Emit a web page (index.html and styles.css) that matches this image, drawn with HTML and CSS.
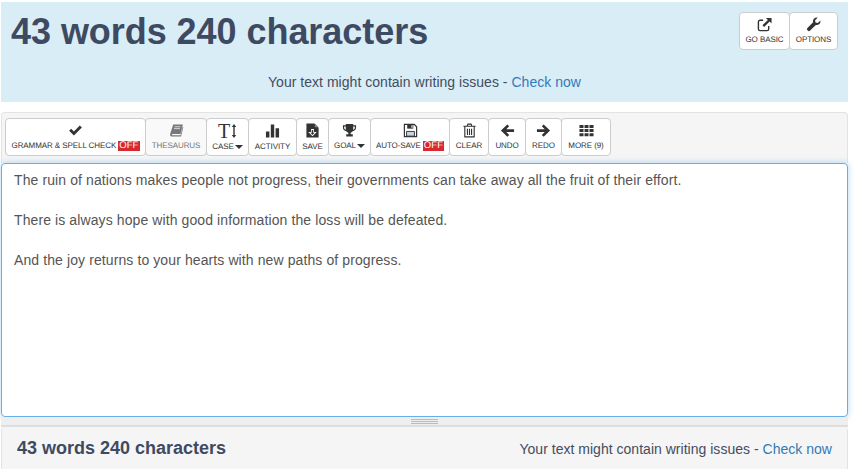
FILE: index.html
```html
<!DOCTYPE html>
<html lang="en">
<head>
<meta charset="utf-8">
<title>Word counter</title>
<link rel="stylesheet" href="styles.css">
</head>
<body>
<div class="page">
  <header class="hero">
    <div class="hero-top">
      <h1 class="hero-title">43 words 240 characters</h1>
      <div class="btn-group">
        <button class="tool tool-basic"><svg class="ico" viewBox="0 0 16 16"><path d="M6.500 3.500H3.200A1.700 1.700 0 0 0 1.500 5.200v7.600a1.700 1.700 0 0 0 1.700 1.700h7.600a1.700 1.700 0 0 0 1.700-1.700V9.500" fill="none" stroke="#333" stroke-width="1.500"/><path d="M9.500 1H15.500V7L13.400 4.900 7.600 10.700 5.800 8.900 11.600 3.100Z" fill="#333"/></svg><span class="lbl">GO BASIC</span></button>
        <button class="tool tool-options"><svg class="ico" viewBox="0 0 16 16"><path d="M15.300 3.600c.3 1.500-.1 2.900-1.200 3.900-1 .9-2.300 1.200-3.600.9L4.400 14.500a1.700 1.700 0 0 1-2.400 0l-.5-.5a1.700 1.700 0 0 1 0-2.400L7.600 5.500c-.3-1.300 0-2.600.9-3.600C9.500.8 10.900.4 12.400.7L9.700 3.400l.4 2.500 2.500.4Z" fill="#333"/></svg><span class="lbl">OPTIONS</span></button>
      </div>
    </div>
    <p class="hero-note">Your text might contain writing issues - <a class="link" href="#">Check now</a></p>
  </header>

  <section class="editor">
    <div class="toolbar">
      <button class="tool tool-grammar"><svg class="ico" viewBox="0 0 16 16"><path d="M1.200 8.300 3.400 6.100 6.300 9 12.600 2.700 14.800 4.900 6.300 13.400Z" fill="#333"/></svg><span class="lbl">GRAMMAR &amp; SPELL CHECK<b class="off">OFF</b></span></button>
      <button class="tool tool-thes"><svg class="ico" viewBox="0 0 16 16"><path d="M4.500 1.500H14.800L12.300 11.800H3.800C3 11.800 2.700 12.800 3.400 13H12.300L14.700 4 15.300 4.500 12.800 14.500H3C1.500 14.500 .8 13 1.300 11.500Z" fill="#777"/><path d="M5.800 4h6.400M5.300 6h6.400" stroke="#f5f5f5" stroke-width=".8"/></svg><span class="lbl">THESAURUS</span></button>
      <button class="tool tool-case"><span class="case-ico">T<span class="case-arrow"><svg viewBox="0 0 6 14"><path d="M3 0 5.200 3H3.700V11H5.200L3 14 .8 11H2.300V3H.8Z" fill="#333"/></svg></span></span><span class="lbl">CASE<i class="caret"></i></span></button>
      <button class="tool tool-activity"><svg class="ico" viewBox="0 0 16 16"><path d="M1 9H4.700V15.500H1ZM6.200 1.500H9.800V15.500H6.200ZM11.300 5.500H15V15.500H11.300Z" fill="#333"/></svg><span class="lbl">ACTIVITY</span></button>
      <button class="tool tool-save"><svg class="ico" viewBox="0 0 16 16"><path d="M1.500 .5H10L14.500 5V15.500H1.500Z" fill="#333"/><path d="M10.500 .5V4.500H14.500Z" fill="#888"/><path d="M6.500 6.500H9.500V9.500H12.500L8 14 3.500 9.500H6.500Z" fill="#fff"/><path d="M7.300 7.500H8.700V10.500H10.300L8 12.800 5.700 10.500H7.300Z" fill="#333"/></svg><span class="lbl">SAVE</span></button>
      <button class="tool tool-goal"><svg class="ico" viewBox="0 0 16 16"><path d="M4 1H12V2.500H15V5C15 7 13.500 8.300 11.400 8.700 10.900 9.400 10 10 9.200 10.300V12H11.500V14.500H4.500V12H6.800V10.300C6 10 5.100 9.400 4.600 8.700 2.500 8.300 1 7 1 5V2.500H4ZM2.300 3.700V5C2.300 6 3 6.900 4.200 7.300 4 6.100 4 4.900 4 3.700ZM13.700 3.700H12C12 4.900 12 6.100 11.800 7.300 13 6.900 13.700 6 13.700 5Z" fill="#333"/></svg><span class="lbl">GOAL<i class="caret"></i></span></button>
      <button class="tool tool-auto"><svg class="ico" viewBox="0 0 16 16"><path d="M1.500 1.500H12L14.500 4V14.500H1.500Z" fill="none" stroke="#333" stroke-width="1.300"/><path d="M4.500 1.500H11V6H4.500Z" fill="#333"/><path d="M9 2.500H10.200V5H9Z" fill="#fff"/><path d="M3.800 9H12.200V14H3.800Z" fill="#c9d3e0" stroke="#333"/></svg><span class="lbl">AUTO-SAVE<b class="off">OFF</b></span></button>
      <button class="tool tool-clear"><svg class="ico" viewBox="0 0 16 16"><path d="M1.500 3.500H14.500M5.500 3.500 6.300 1.200H9.700L10.500 3.500M3 3.500V14.800H13V3.500M5.800 6V12.800M8 6V12.800M10.200 6V12.800" fill="none" stroke="#333" stroke-width="1.200"/></svg><span class="lbl">CLEAR</span></button>
      <button class="tool tool-undo"><svg class="ico" viewBox="0 0 16 16"><path d="M7.800 1.500 9.800 3.500 6.700 6.600H15V9.600H6.700L9.800 12.700 7.800 14.700 1 8.100Z" fill="#333"/></svg><span class="lbl">UNDO</span></button>
      <button class="tool tool-redo"><svg class="ico" viewBox="0 0 16 16"><path d="M8.200 1.500 6.200 3.500 9.300 6.600H1V9.600H9.300L6.200 12.700 8.200 14.700 15 8.100Z" fill="#333"/></svg><span class="lbl">REDO</span></button>
      <button class="tool tool-more"><svg class="ico ico-wide" viewBox="0 0 16 13"><path d="M.5 .5H4.800V3.700H.5ZM5.900 .5H10.100V3.700H5.900ZM11.200 .5H15.500V3.700H11.200ZM.5 4.900H4.800V8.100H.5ZM5.900 4.900H10.100V8.100H5.900ZM11.200 4.900H15.500V8.100H11.200ZM.5 9.300H4.800V12.500H.5ZM5.900 9.300H10.100V12.500H5.900ZM11.200 9.300H15.500V12.500H11.200Z" fill="#333"/></svg><span class="lbl">MORE (9)</span></button>
    </div>
    <div class="textbox">
      <p>The ruin of nations makes people not progress, their governments can take away all the fruit of their effort.</p>
      <p>There is always hope with good information the loss will be defeated.</p>
      <p>And the joy returns to your hearts with new paths of progress.</p>
    </div>
    <div class="resizer"><span class="grip"></span></div>
  </section>

  <footer class="foot">
    <strong class="foot-count">43 words 240 characters</strong>
    <span class="foot-note">Your text might contain writing issues - <a class="link" href="#">Check now</a></span>
  </footer>
</div>
</body>
</html>
```
FILE: styles.css
```css
* { box-sizing: border-box; }
html, body { margin: 0; padding: 0; height: 469px; overflow: hidden; background: #fff; }
body { font-family: "Liberation Sans", Arial, sans-serif; color: #333; }
.page { width: 848px; padding: 2px 0 0 1px; }

.hero { height: 100px; background: #d9edf7; padding: 0 10px; display: flex; flex-direction: column; }
.hero-top { display: flex; justify-content: space-between; height: 70px; }
.hero-title { margin: 8px 0 0; font-size: 36px; line-height: 44px; font-weight: 700; color: #3e4a61; letter-spacing: -.05px; }
.btn-group { display: flex; margin-top: 10px; height: 38px; }
.hero-note { margin: 0; text-align: center; font-size: 14px; letter-spacing: .03px; line-height: 20px; color: #444c5e; }
.link { color: #337ab7; text-decoration: none; }

.editor { margin-top: 10px; }
.toolbar { height: 51px; background: #f5f5f5; border: 1px solid #e3e3e3; border-bottom: 0; border-radius: 4px 4px 0 0; padding: 5px 3px 0; display: flex; align-items: flex-start; }

.tool { height: 38px; background: #fff; border: 1px solid #ccc; border-radius: 4px; padding: 0; font: inherit; color: #333; display: flex; flex-direction: column; align-items: center; justify-content: flex-start; flex: none; margin-right: -1px; }
.lbl { font-size: 8px; letter-spacing: -.08px; line-height: 10px; white-space: nowrap; display: flex; align-items: center; margin-top: 3px; text-rendering: geometricPrecision; }
.ico { width: 15px; height: 15px; margin-top: 4px; display: block; }
.ico-wide { height: 13px; margin-top: 5px; margin-bottom: 1px; }
.off { background: #d9282e; color: #fff; font-weight: 400; font-size: 9.5px; letter-spacing: .1px; line-height: 10px; padding: 0 1px; margin-left: 2px; }
.caret { display: inline-block; width: 0; height: 0; border: 4px solid transparent; border-top-color: #333; border-bottom: 0; margin-left: 1px; }

.tool-basic { width: 51px; }
.tool-options { width: 49px; margin-right: 0; }
.tool-grammar { width: 141px; }
.tool-thes { width: 62px; background: #f9f9f9; color: #777; }
.tool-case { width: 43px; }
.tool-activity { width: 49px; }
.tool-save { width: 33px; }
.tool-goal { width: 43px; }
.tool-auto { width: 80px; }
.tool-clear { width: 40px; }
.tool-undo { width: 38px; }
.tool-redo { width: 37px; }
.tool-more { width: 50px; margin-right: 0; }

.case-ico { font-family: "Liberation Serif", serif; font-size: 20px; line-height: 20px; height: 20px; display: flex; align-items: center; margin-top: 2px; }
.case-arrow { width: 6px; height: 14px; margin-left: 1px; display: block; }
.case-arrow svg { width: 6px; height: 14px; display: block; }
.tool-case .lbl { margin-top: 1px; }
.tool-activity .lbl, .tool-save .lbl { margin-top: 4px; }

.textbox { height: 254px; background: #fff; border: 1px solid #66afe9; border-radius: 4px; padding: 6px 12px; font-size: 14px; letter-spacing: .1px; line-height: 20px; color: #555; box-shadow: 0 0 6px rgba(102,175,233,.5); }
.textbox p { margin: 0 0 20px; }
.resizer { height: 10px; background: #eee; border-bottom: 2px solid #ddd; display: flex; justify-content: center; padding-top: 2px; }
.grip { width: 27px; height: 5px; border-top: 1px solid #bbb; border-bottom: 1px solid #bbb; }
.grip::after { content: ""; display: block; height: 1px; margin-top: 1px; background: #bbb; }

.foot { height: 43px; background: #f5f5f5; border: 1px solid #e3e3e3; border-bottom: 0; border-top: 0; border-radius: 4px 4px 0 0; padding: 0 15px; display: flex; justify-content: space-between; align-items: center; }
.foot-count { font-size: 18px; font-weight: 700; color: #3e4a61; }
.foot-note { font-size: 14px; letter-spacing: .02px; color: #444c5e; }
```
